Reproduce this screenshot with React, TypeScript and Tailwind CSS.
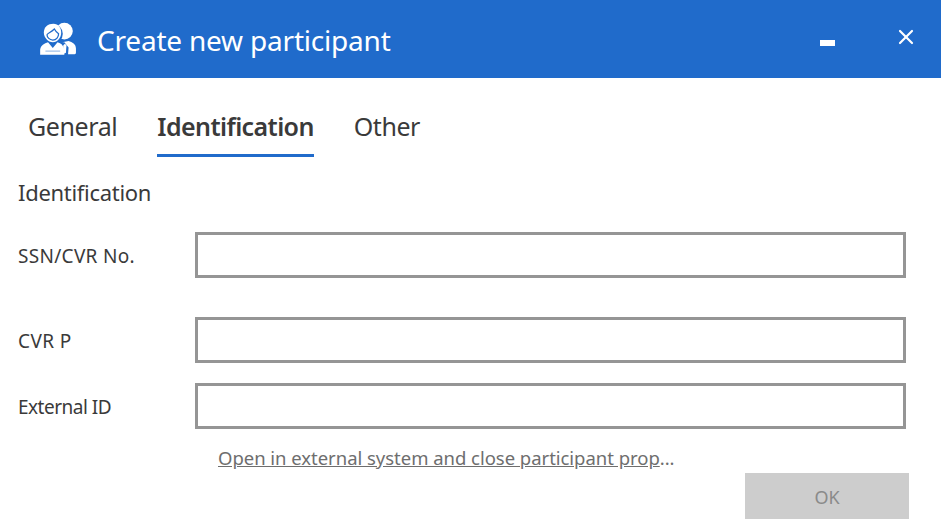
import { X } from 'lucide-react';

const font = { fontFamily: '"Noto Sans", sans-serif' };

function ParticipantsIcon() {
    return (
        <svg width="40" height="40" viewBox="0 0 38 38" fill="white">
            {/* back person */}
            <circle cx="26" cy="11.500" r="8" />
            <path d="M24 22 L30 21 C33.500 22 37 24 37 28 L37 32 C37 33 36 33.500 35 33.500 L29.500 33.500 L30 27 L26 22 Z" />
            <path d="M25 25 L26.500 23.500 L28 25 L27.500 32 L25.500 33 L24.500 32 Z" />
            {/* front person */}
            <circle cx="15" cy="14" r="9.500" fill="#206bcb" />
            <path d="M6.500 13 C6.500 7.500 10.500 4.500 15.500 4.500 C20.500 4.500 23 8.500 23 13 C23 17.500 19.500 22 15 22 C10.500 22 6.500 17.500 6.500 13 Z" />
            <path d="M9.500 15 C9.500 13.500 13 13 16.500 9.500 C17.500 11.500 18.500 12.500 20.500 14 C20.500 17 18.500 20 15 20 C12 20 9.500 17.500 9.500 15 Z" fill="none" stroke="#206bcb" strokeWidth="1.2" />
            <path d="M10.500 22 L15 27.500 L19.500 22 C23 23 25 25 25.500 28 L26 34 L3 34 L3 29 C3.500 25 7 23 10.500 22 Z" />
            <path d="M8 30 L22 30 L22 31 L8 31 Z" fill="#206bcb" opacity="0.5" />
        </svg>
    );
}

function FieldRow({ label, labelClass, className }: { label: string; labelClass: string; className?: string }) {
    return (
        <div className={`flex items-center ${className ?? ''}`}>
            <label className={`w-[195px] pl-[18px] pt-[3px] text-[19px] text-[#3a3a3a] ${labelClass}`}>{label}</label>
            <input className="h-[46px] w-[711px] border-[3px] border-[#959595] bg-white outline-none" />
        </div>
    );
}

export default function App() {
    return (
        <div className="w-[941px] h-[530px] bg-white overflow-hidden" style={font}>
            <header className="h-[78px] bg-[#206bcb] flex items-center text-white">
                <div className="ml-[37px] w-[60px]">
                    <ParticipantsIcon />
                </div>
                <h1 className="text-[28px] font-normal tracking-[-0.2px] mt-[2px]">Create new participant</h1>
                <div className="ml-auto flex items-center">
                    <span className="block w-[15px] h-[6px] bg-white mt-[8px] mr-[59px]" />
                    <X size={24} strokeWidth={2.2} className="mr-[23px] -mt-[5px]" />
                </div>
            </header>

            <nav className="flex pl-[28px] gap-[40px] h-[79px] pt-[30px] text-[25px] text-[#3a3a3a]">
                <span className="tracking-[-0.4px]">General</span>
                <span className="h-[49px] font-semibold tracking-[-0.6px] border-b-[3px] border-[#206bcb]">Identification</span>
                <span className="tracking-[-0.45px]">Other</span>
            </nav>

            <h2 className="pl-[18px] mt-[19px] h-[56px] text-[22px] text-[#3a3a3a] tracking-[-0.3px]">Identification</h2>

            <FieldRow label="SSN/CVR No." labelClass="tracking-[0.3px]" />
            <FieldRow label="CVR P" labelClass="tracking-[0.4px]" className="mt-[39px]" />
            <FieldRow label="External ID" labelClass="tracking-[-0.5px]" className="mt-[20px]" />

            <div className="pl-[218px] mt-[15px] text-[18.500px] text-[#6e6e6e] tracking-[-0.03px]">
                <a className="underline">Open in external system and close participant prop</a>
                <span>...</span>
            </div>
            <div className="flex justify-end pr-[32px] mt-[1px]">
                <button className="w-[164px] h-[46px] pt-[3px] bg-[#cdcdcd] text-[#8a8a8a] text-[18px]">OK</button>
            </div>
        </div>
    );
}
